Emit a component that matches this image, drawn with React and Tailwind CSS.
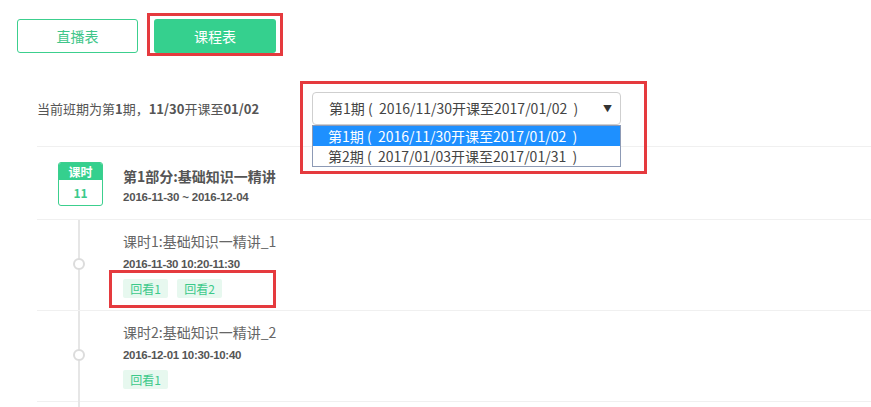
import React from 'react';

const lessons = [
  { title: '课时1:基础知识一精讲_1', time: '2016-11-30 10:20-11:30', replays: ['回看1', '回看2'], mark: true },
  { title: '课时2:基础知识一精讲_2', time: '2016-12-01 10:30-10:40', replays: ['回看1'] },
];

const options = [
  '第1期 (\u00a0\u00a02016/11/30开课至2017/01/02\u00a0 )',
  '第2期 (\u00a0\u00a02017/01/03开课至2017/01/31\u00a0 )',
];

function Lesson({ lesson }) {
  return (
    <div className="relative flex h-[91px] border-t border-[#f0f0f0]">
      <div className="relative w-[86px] shrink-0">
        <div className="absolute left-[36px] top-[38px] h-[12px] w-[12px] rounded-full border-2 border-[#dcdcdc] bg-white"></div>
      </div>
      <div className="pt-[11px]">
        <p className="text-[14px] leading-[20px] text-[#666]">{lesson.title}</p>
        <p className="mt-[5px] font-['Liberation_Sans',sans-serif] text-[11.5px] font-bold leading-[16px] tracking-[-0.3px] text-[#555]">{lesson.time}</p>
        <div className="relative mt-[7px] flex gap-[9px]">
          {lesson.replays.map(r => (
            <span key={r} className="flex h-[19px] w-[45px] items-center justify-center rounded-[2px] bg-[#e7f8ef] text-[12px] text-[#3cc98a]">{r}</span>
          ))}
          {lesson.mark && <div className="absolute -left-[14px] -top-[9px] h-[38px] w-[167px] border-[3px] border-[#e53a3e]"></div>}
        </div>
      </div>
    </div>
  );
}

export default function App() {
  return (
    <div className="relative h-[407px] w-[871px] overflow-hidden bg-white font-['Noto_Sans_CJK_SC','Noto_Sans',sans-serif]">
      {/* tabs */}
      <div className="flex gap-4 pl-[17px] pt-[19px]">
        <button className="flex h-[34px] w-[121px] items-center justify-center rounded-[3px] border border-[#3ccf8e] text-[14px] text-[#3fc68a]">直播表</button>
        <div className="relative">
          <button className="flex h-[34px] w-[122px] items-center justify-center rounded-[3px] bg-[#35d08e] text-[14px] text-white">课程表</button>
          <div className="absolute -left-[7px] -top-[6px] h-[43px] w-[136px] border-[3px] border-[#e53a3e]"></div>
        </div>
      </div>

      {/* period select */}
      <div className="mt-[39px] flex items-center pl-[37px]">
        <span className="w-[275px] text-[13px] text-[#555]">
          当前班期为第<b>1</b>期，<b>11/30</b>开课至<b>01/02</b>
        </span>
        <div className="relative z-10">
          <div className="flex h-[33px] w-[309px] items-center justify-between rounded-[4px] border border-[#cfcfcf] bg-white pl-[16px] pr-[8px] text-[14px] text-[#444]">
            <span>{options[0]}</span>
            <span className="text-[9px] text-[#333]">▼</span>
          </div>
          <div className="absolute left-0 top-full w-[309px] border border-[#8d9ab5] bg-white text-[14px] leading-[20px]">
            <div className="bg-[#1e90ff] pl-[15px] text-white">{options[0]}</div>
            <div className="pl-[15px] text-[#444]">{options[1]}</div>
          </div>
          <div className="absolute -left-[12px] -top-[11px] h-[93px] w-[347px] border-[3px] border-[#e53a3e]"></div>
        </div>
      </div>

      {/* schedule */}
      <div className="ml-[37px] mt-[21px] border-t border-[#f0f0f0]">
        <div className="flex h-[72px]">
          <div className="ml-[21px] mt-[15px] h-[44px] w-[45px] overflow-hidden rounded-[3px] border border-[#3ccf8e] text-center text-[12px] font-bold">
            <div className="h-[17px] bg-[#35d08e] leading-[17px] text-white">课时</div>
            <div className="leading-[25px] text-[#3cc98a]">11</div>
          </div>
          <div className="ml-[20px] pt-[19px]">
            <p className="text-[14px] font-bold leading-[20px] text-[#555]">第1部分:基础知识一精讲</p>
            <p className="mt-[3px] font-['Liberation_Sans',sans-serif] text-[11.5px] font-bold leading-[16px] tracking-[-0.2px] text-[#555]">2016-11-30 ~ 2016-12-04</p>
          </div>
        </div>
        <div className="relative">
          <div className="absolute bottom-0 left-[41px] top-0 z-0 w-[2px] bg-[#e6e6e6]"></div>
          {lessons.map(l => <Lesson key={l.title} lesson={l} />)}
          <div className="h-[20px] border-t border-[#f0f0f0]"></div>
        </div>
      </div>
    </div>
  );
}
